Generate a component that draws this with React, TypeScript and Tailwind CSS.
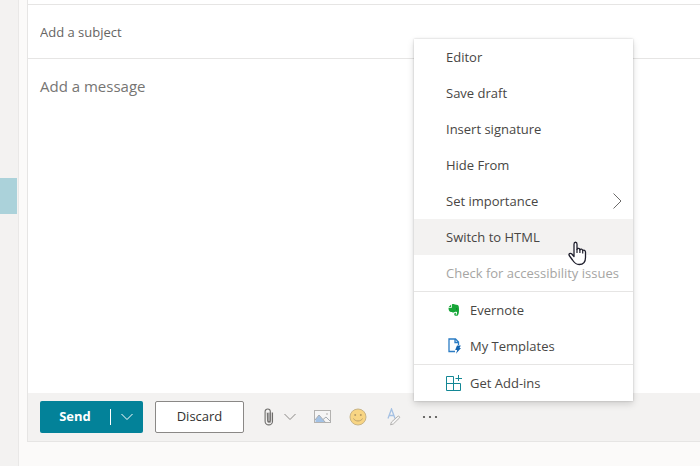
import type { ReactNode } from "react";

function Chevron({ className }: { className?: string }) {
  return (
    <svg className={className} width="12" height="8" viewBox="0 0 12 8" fill="none" stroke="currentColor" aria-hidden="true">
      <path d="M0.5 1L6 6.5L11.5 1" />
    </svg>
  );
}

function PaperclipIcon() {
  return (
    <svg width="10" height="18" viewBox="0 0 10 18" fill="none" aria-hidden="true">
      <path d="M2.5 4.5h5V13a2.2 2.2 0 0 1-4.4 0z" fill="#b5b4b3" />
      <path
        d="M8.5 4.5V13.2a3.7 3.7 0 0 1-7.4 0V3.6a2.6 2.6 0 0 1 5.2 0v9a1.3 1.3 0 0 1-2.6 0V5"
        stroke="#6e6d6b"
        strokeWidth="1.1"
      />
    </svg>
  );
}

function PictureIcon() {
  return (
    <svg width="18" height="14" viewBox="0 0 18 14" fill="none" aria-hidden="true">
      <rect x="1.5" y="0.5" width="16" height="12" fill="#f5f5f5" stroke="#b3b2b0" />
      <path d="M2.5 9.5L6 5.2L12 12H2.5z" fill="#a3c2e5" />
      <path d="M2 10L6 5L12.5 12.5M10 9.5L13 7L17.5 11.5" stroke="#a5abb2" />
      <rect x="13" y="3" width="2" height="2" fill="#d3d2d1" />
    </svg>
  );
}

function SmileIcon() {
  return (
    <svg width="18" height="18" viewBox="0 0 18 18" fill="none" aria-hidden="true">
      <circle cx="9" cy="9" r="8" fill="#f8d583" stroke="#c8b487" />
      <circle cx="6.2" cy="7" r="1" fill="#b39a66" />
      <circle cx="11.8" cy="7" r="1" fill="#b39a66" />
      <path d="M4.5 10.5C6 13.8 12 13.8 13.5 10.5" stroke="#b9a06b" />
    </svg>
  );
}

function FormatIcon() {
  return (
    <svg width="14" height="18" viewBox="0 0 14 18" fill="none" aria-hidden="true">
      <path d="M1 10.5L4.5 1L8 10.5M2.3 7.5H6.7" stroke="#a5c1e3" strokeWidth="1.3" />
      <path d="M3.5 16.8L4.5 14L11 8.2C11.8 7.6 13.3 9 12.5 9.9L6.3 16z" fill="#f5f5f5" stroke="#b3b2b0" />
    </svg>
  );
}

function EvernoteIcon() {
  return (
    <svg width="12" height="14" viewBox="0 0 12 14" aria-hidden="true">
      <path
        d="M4 1.3C5 0.7 6.3 0.8 7 1.5L9.6 2.1C10.8 2.4 11 4.5 11 6.5C11 9.5 10.7 12.8 8.8 12.8H7.6C6.3 12.8 5.9 11.3 6.5 10.3C7 9.5 8.3 9.6 8.5 10.3L7.6 10.7V11.6H9V8.9C7.5 8.5 6.6 8.6 6.2 9.2C5.4 9.8 2.8 9.4 1.7 8.6C0.9 7.8 0.5 6.3 0.5 4.8H3.2C3.9 4.8 4 4.5 4 4z"
        fill="#16a637"
      />
      <path d="M0.7 3.9L3.2 1.4V3.9z" fill="#16a637" />
      <circle cx="8.6" cy="5.9" r="0.6" fill="#0b7424" />
    </svg>
  );
}

function TemplateIcon() {
  return (
    <svg width="13" height="16" viewBox="0 0 13 16" fill="none" aria-hidden="true">
      <path d="M7 13.5H1V1H7.5L10.5 4V7M7 1V4.5H10.5" stroke="#2b7cc4" strokeWidth="1.3" />
      <path d="M9 7.5H12.8L11.5 10H13L8 15.8L9.2 12H7.2z" fill="#1565b0" />
    </svg>
  );
}

function AddInsIcon() {
  return (
    <svg width="16" height="16" viewBox="0 0 16 16" fill="none" stroke="#138795" aria-hidden="true">
      <path d="M7.5 1.5H0.5V15.5H14.5V8.5H0.5M7.5 1.5V15.5M12.5 0V6M9.5 3.5H16" />
    </svg>
  );
}

function HandPointer() {
  return (
    <svg
      className="pointer-events-none absolute left-[154px] top-[22px] z-10"
      width="19"
      height="25"
      viewBox="0 0 19 25"
      aria-hidden="true"
    >
      <path
        d="M6 15.5V3.2C6 0.6 9 0.6 9 3.2V8.3C9.5 7 11.7 7.2 11.9 8.8C12.6 7.7 14.5 8 14.7 9.6C15.7 8.7 17.5 9.3 17.5 11V16.5C17.5 20.8 15 23.5 11.2 23.5C7.5 23.5 6 21.5 4.5 19L1.2 14.5C0.4 12.9 2.2 11.6 3.6 12.8z"
        fill="#fff"
        stroke="#20202e"
        strokeWidth="1.3"
        strokeLinejoin="round"
      />
      <path d="M9 8V12M11.9 8.7V12M14.7 9.5V12.5" stroke="#20202e" strokeWidth="1.2" />
    </svg>
  );
}

type ItemProps = {
  label: string;
  icon?: ReactNode;
  disabled?: boolean;
  active?: boolean;
  submenu?: boolean;
};

function MenuItem({ label, icon, disabled, active, submenu }: ItemProps) {
  return (
    <li role="none" className="relative">
      <button
        type="button"
        role="menuitem"
        disabled={disabled}
        aria-haspopup={submenu ? "menu" : undefined}
        className={`flex h-9 w-full items-center whitespace-nowrap pl-8 pr-2.5 text-left hover:bg-[#f3f2f1] disabled:text-[#a6a5a3] ${active ? "bg-[#f3f2f1]" : ""}`}
      >
        {icon && <span className="flex w-6 shrink-0 items-center">{icon}</span>}
        <span className="flex-1 pt-0.5">{label}</span>
        {submenu && (
          <svg width="10" height="16" viewBox="0 0 10 16" fill="none" stroke="#6b6a69" aria-hidden="true">
            <path d="M0.5 0.5L8 8L0.5 15.5" />
          </svg>
        )}
      </button>
      {active && <HandPointer />}
    </li>
  );
}

function MoreMenu() {
  return (
    <ul
      role="menu"
      aria-label="More options"
      className="absolute bottom-full left-0 z-20 w-[219px] bg-white text-[13px] text-[#484644] shadow-[0_3px_7px_rgba(0,0,0,0.15),0_0_2px_rgba(0,0,0,0.2)]"
    >
      <MenuItem label="Editor" />
      <MenuItem label="Save draft" />
      <MenuItem label="Insert signature" />
      <MenuItem label="Hide From" />
      <MenuItem label="Set importance" submenu />
      <MenuItem label="Switch to HTML" active />
      <MenuItem label="Check for accessibility issues" disabled />
      <li role="separator" className="h-px bg-[#e6e5e4]" />
      <MenuItem label="Evernote" icon={<span className="pl-0.5"><EvernoteIcon /></span>} />
      <MenuItem label="My Templates" icon={<span className="pl-0.5"><TemplateIcon /></span>} />
      <li role="separator" className="h-px bg-[#e6e5e4]" />
      <MenuItem label="Get Add-ins" icon={<AddInsIcon />} />
    </ul>
  );
}

function ToolButton({ label, children }: { label: string; children: ReactNode }) {
  return (
    <button type="button" aria-label={label} className="flex size-8 items-center justify-center">
      {children}
    </button>
  );
}

function Toolbar() {
  return (
    <div className="flex h-12 shrink-0 items-center bg-[#f3f2f1] pl-3">
      <div className="flex h-8 w-[103px] shrink-0 items-center rounded-xs bg-[#038299] text-white">
        <button type="button" className="h-full flex-1 text-[13px] font-bold">
          Send
        </button>
        <span className="h-4 w-px bg-white" />
        <button type="button" aria-label="More send options" className="flex h-full w-8 items-center justify-center">
          <Chevron />
        </button>
      </div>
      <button
        type="button"
        className="ml-3 h-8 w-[89px] shrink-0 rounded-xs border border-[#8a8886] bg-white text-[13px] text-[#323130]"
      >
        Discard
      </button>
      <div className="ml-4 flex items-center gap-1">
        <button type="button" aria-label="Attach" className="flex h-8 w-[42px] items-center justify-between pl-1 pr-1.5">
          <PaperclipIcon />
          <Chevron className="text-[#8a8886]" />
        </button>
        <ToolButton label="Insert picture">
          <PictureIcon />
        </ToolButton>
        <ToolButton label="Insert emoji">
          <SmileIcon />
        </ToolButton>
        <ToolButton label="Formatting options">
          <FormatIcon />
        </ToolButton>
        <div className="relative">
          <ToolButton label="More">
            <svg width="16" height="4" viewBox="0 0 16 4" fill="#4b4a48" aria-hidden="true">
              <circle cx="2" cy="2" r="1.1" />
              <circle cx="8" cy="2" r="1.1" />
              <circle cx="14" cy="2" r="1.1" />
            </svg>
          </ToolButton>
          <MoreMenu />
        </div>
      </div>
    </div>
  );
}

export default function App() {
  return (
    <div className="flex h-screen overflow-hidden bg-[#fbfaf9] font-['Open_Sans','Noto_Sans',sans-serif]">
      <aside className="w-[19px] shrink-0 border-r border-[#e9e8e7] bg-[#f3f2f1] pt-[178px]">
        <div className="h-9 w-[17px] bg-[#abd2da]" />
      </aside>
      <main className="ml-2 mb-6 flex min-w-0 flex-1 flex-col border-b border-l border-[#e6e5e4] bg-white">
        <div className="h-[5px] shrink-0 border-b border-[#e6e5e4]" />
        <input
          aria-label="Subject"
          placeholder="Add a subject"
          className="h-[54px] shrink-0 border-b border-[#e6e5e4] px-3 text-[13px] outline-none placeholder:text-[#666563]"
        />
        <textarea
          aria-label="Message"
          placeholder="Add a message"
          className="min-h-0 flex-1 resize-none px-3 pt-4 text-[15px] leading-[22px] outline-none placeholder:text-[#767573]"
        />
        <Toolbar />
      </main>
    </div>
  );
}
